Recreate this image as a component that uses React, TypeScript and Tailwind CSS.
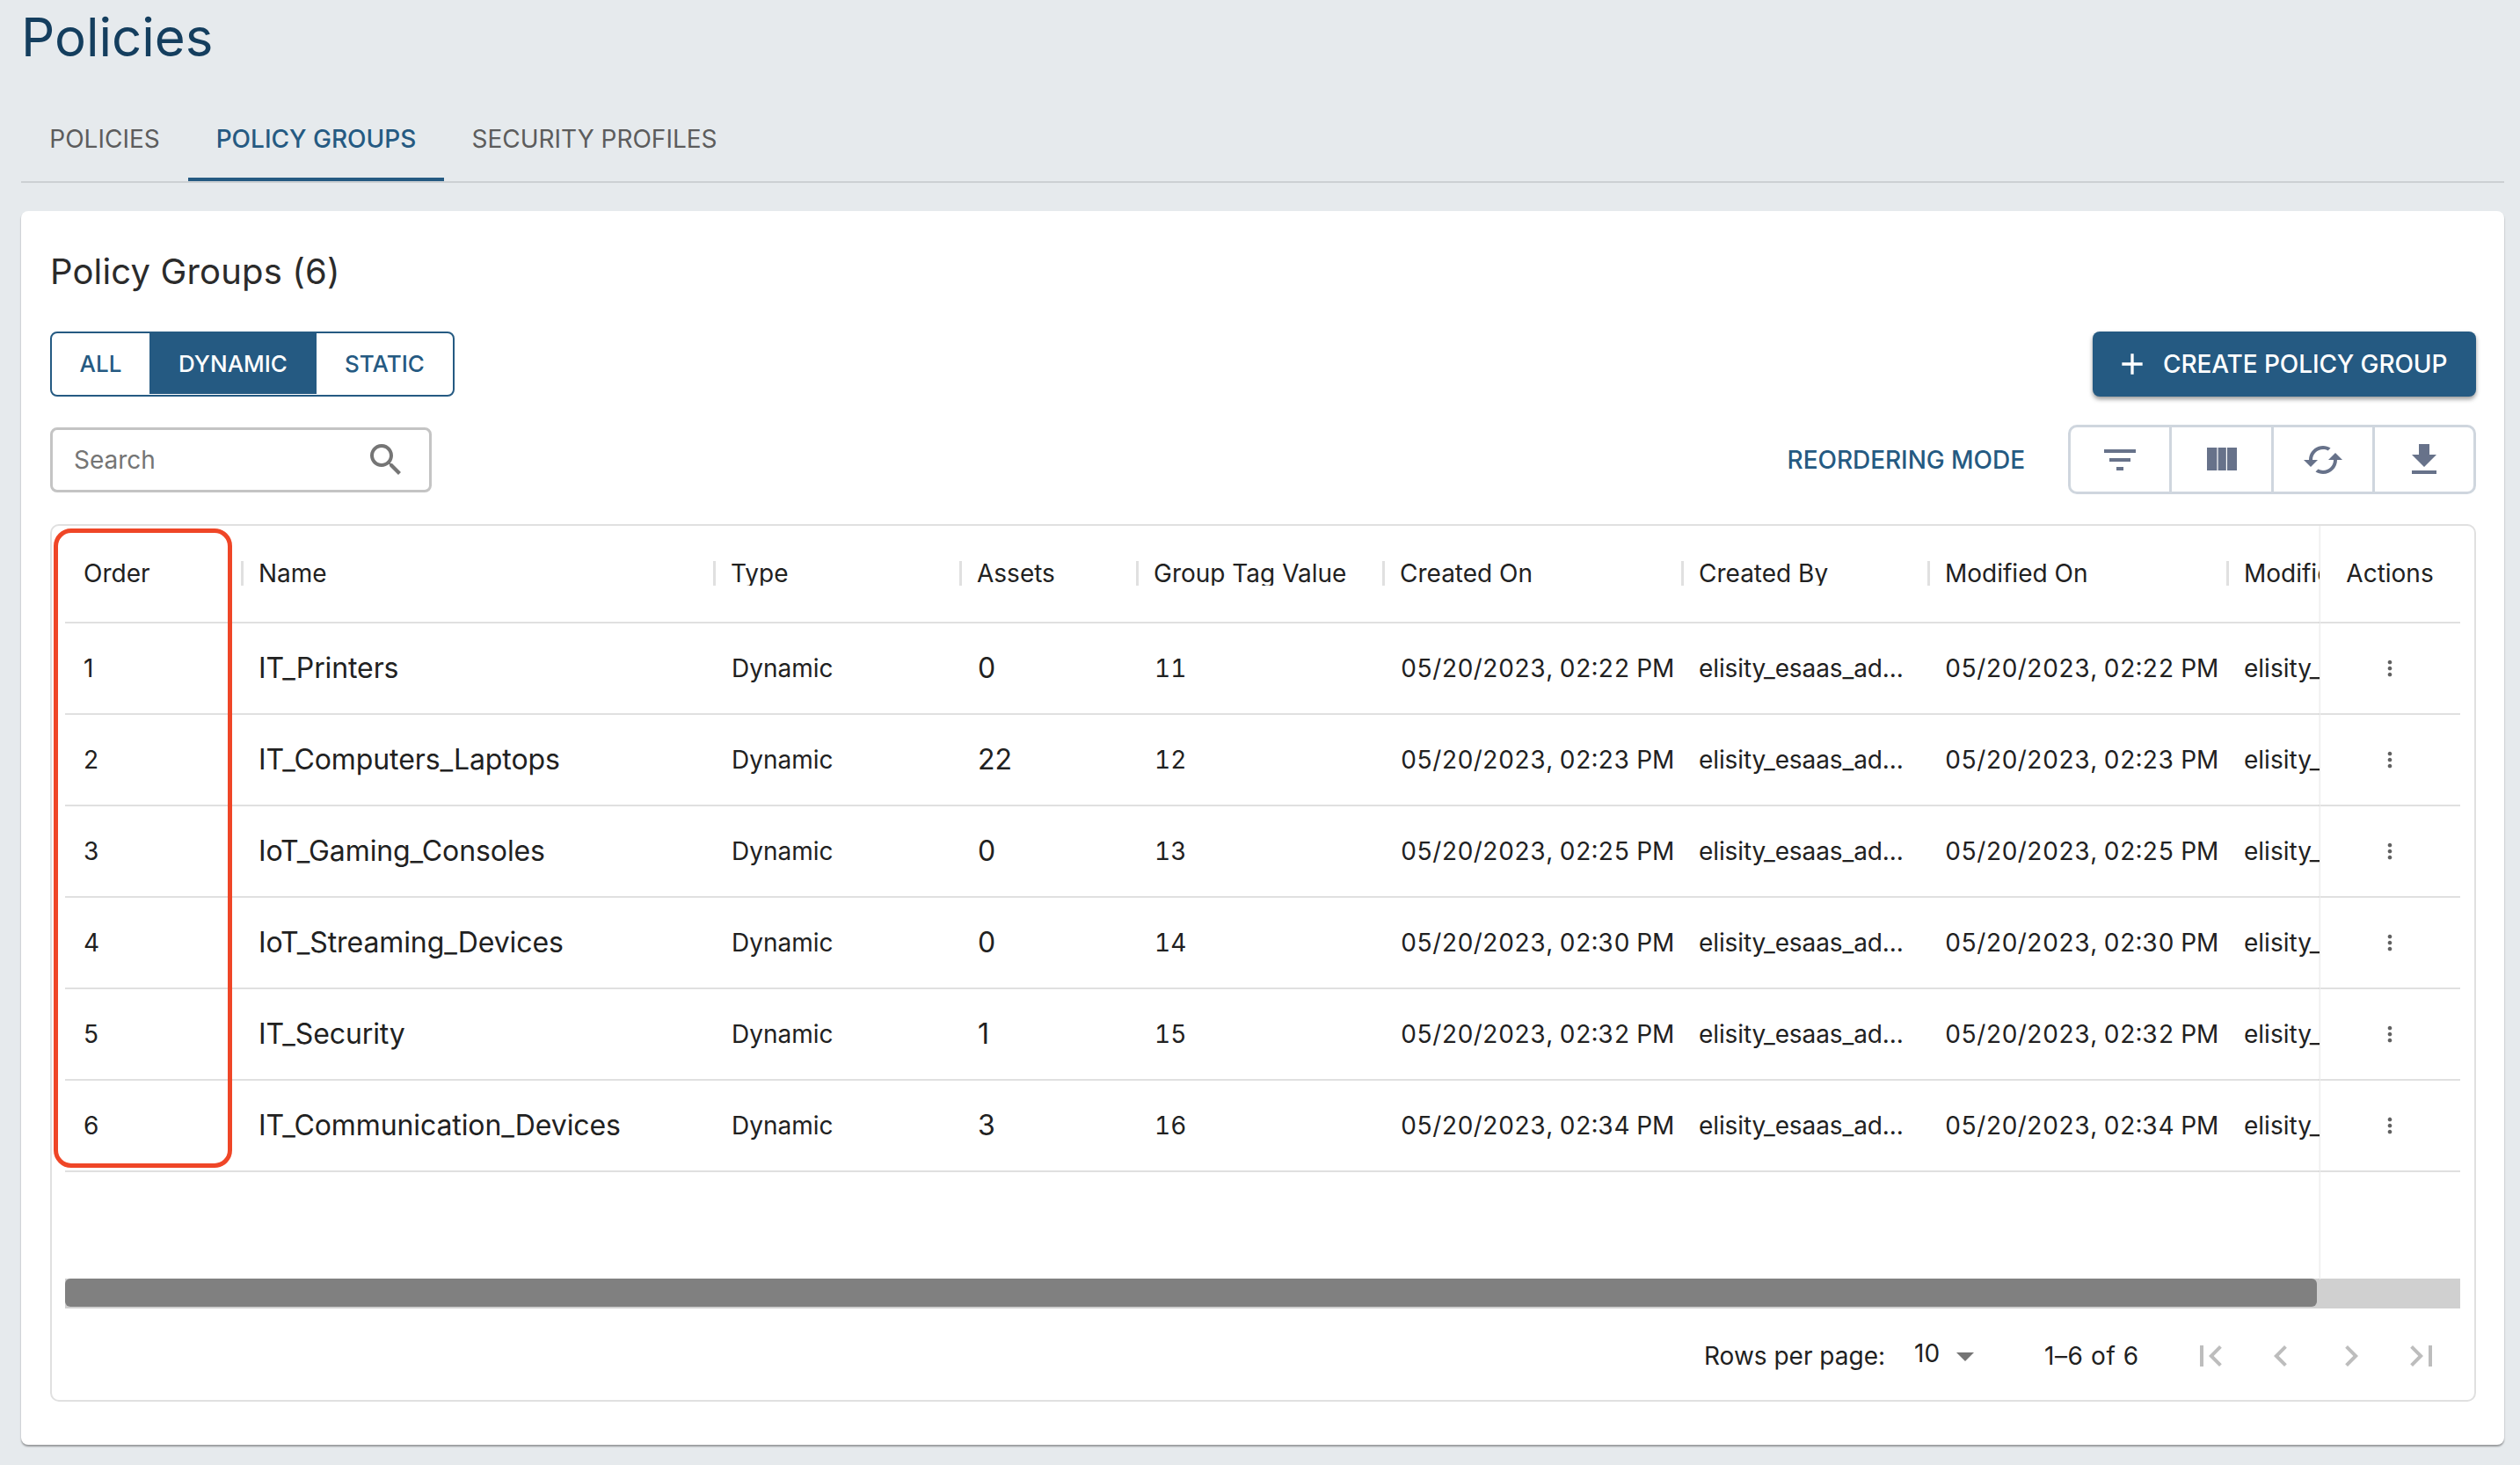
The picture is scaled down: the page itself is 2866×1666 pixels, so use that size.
const font = "[font-family:Inter,'Liberation_Sans',sans-serif]"

const columns = [
  { label: "Order", width: "w-[200px]" },
  { label: "Name", width: "w-[537px]" },
  { label: "Type", width: "w-[280px]" },
  { label: "Assets", width: "w-[201px]" },
  { label: "Group Tag Value", width: "w-[280px]" },
  { label: "Created On", width: "w-[340px]" },
  { label: "Created By", width: "w-[280px]" },
  { label: "Modified On", width: "w-[340px]" },
  { label: "Modified By", width: "w-[280px]" },
]

const rows = [
  { order: 1, name: "IT_Printers", assets: 0, tag: 11, time: "02:22 PM" },
  { order: 2, name: "IT_Computers_Laptops", assets: 22, tag: 12, time: "02:23 PM" },
  { order: 3, name: "IoT_Gaming_Consoles", assets: 0, tag: 13, time: "02:25 PM" },
  { order: 4, name: "IoT_Streaming_Devices", assets: 0, tag: 14, time: "02:30 PM" },
  { order: 5, name: "IT_Security", assets: 1, tag: 15, time: "02:32 PM" },
  { order: 6, name: "IT_Communication_Devices", assets: 3, tag: 16, time: "02:34 PM" },
]

function Icon({ d, className }: { d: string; className: string }) {
  return (
    <svg viewBox="0 0 24 24" fill="currentColor" className={className}>
      <path d={d} />
    </svg>
  )
}

function Cell({ width, className, children }: { width: string; className?: string; children: React.ReactNode }) {
  return <div className={`${width} shrink-0 whitespace-nowrap pl-[21px] ${className ?? ""}`}>{children}</div>
}

function Row({ row }: { row: (typeof rows)[number] }) {
  const date = `05/20/2023, ${row.time}`
  return (
    <div className="flex h-[104px] items-center border-b-2 border-[#e0e0e0] text-[#212121]">
      <div className="flex w-[2564px] shrink-0 items-center overflow-hidden">
        <Cell width="w-[200px]" className="text-[28px]">{row.order}</Cell>
        <Cell width="w-[537px]" className="!pl-[20px] text-[32px] tracking-[-0.1px]">{row.name}</Cell>
        <Cell width="w-[280px]" className="text-[28px]">Dynamic</Cell>
        <Cell width="w-[201px]" className="text-[32px]">{row.assets}</Cell>
        <Cell width="w-[280px]" className="text-[28px] tabular-nums">{row.tag}</Cell>
        <Cell width="w-[340px]" className="text-[28px] tabular-nums">{date}</Cell>
        <Cell width="w-[280px]" className="!pl-[20px] text-[28px] tracking-[-0.1px]">elisity_esaas_ad...</Cell>
        <Cell width="w-[340px]" className="!pl-[20px] text-[28px] tabular-nums">{date}</Cell>
        <Cell width="w-[106px] overflow-hidden" className="!pl-[20px] text-[28px]">elisity_esaas_admin</Cell>
      </div>
      <div className="flex flex-1 justify-center">
        <Icon
          d="M12 8c1.1 0 2-.9 2-2s-.9-2-2-2-2 .9-2 2 .9 2 2 2zm0 2c-1.1 0-2 .9-2 2s.9 2 2 2 2-.9 2-2-.9-2-2-2zm0 6c-1.1 0-2 .9-2 2s.9 2 2 2 2-.9 2-2-.9-2-2-2z"
          className="h-[28px] w-[28px] text-[#616161]"
        />
      </div>
    </div>
  )
}

export default function App() {
  return (
    <div className={`h-[1666px] w-[2866px] overflow-hidden bg-[#e6eaed] ${font}`}>
      <div className="flex h-[84px] items-center pl-[24px] text-[60px] leading-none text-[#143e5e]">Policies</div>

      <div className="ml-[24px] mr-[18px] flex h-[124px] items-end border-b-2 border-[#ccd0d3]">
        <div className="flex h-[94px] w-[190px] items-center justify-center pb-[3px] text-[28px] text-[#5c5c5c]">POLICIES</div>
        <div className="flex h-[94px] w-[291px] items-center justify-center border-b-4 border-[#255a82] pt-[1px] text-[28px] font-medium text-[#255a82]">
          POLICY GROUPS
        </div>
        <div className="flex h-[94px] w-[342px] items-center justify-center pb-[3px] text-[28px] text-[#5c5c5c]">SECURITY PROFILES</div>
      </div>

      <div className="ml-[24px] mr-[18px] mt-[32px] h-[1403px] rounded-[8px] bg-white pl-[33px] pr-[32px] pt-[44px] shadow-[0_2px_2px_rgba(0,0,0,0.35)]">
        <div className="flex h-[50px] items-center text-[40px] tracking-[0.15px] text-[#2b2b2b]">Policy Groups (6)</div>

        <div className="mt-[43px] flex h-[74px] items-center justify-between">
          <div className="flex h-full overflow-hidden rounded-[8px] border-2 border-[#255a82] pb-[1px] text-[26px] font-medium text-[#255a82]">
            <div className="flex w-[111px] items-center justify-center">ALL</div>
            <div className="flex w-[190px] items-center justify-center bg-[#255a82] text-white">DYNAMIC</div>
            <div className="flex w-[155px] items-center justify-center">STATIC</div>
          </div>
          <div className="flex h-full w-[436px] items-center rounded-[8px] bg-[#255a82] pl-[25px] text-[28px] font-medium tracking-[-0.1px] text-white shadow-[0_3px_5px_rgba(0,0,0,0.4)]">
            <Icon d="M19 13h-6v6h-2v-6H5v-2h6V5h2v6h6v2z" className="h-[40px] w-[40px]" />
            <span className="ml-[15px]">CREATE POLICY GROUP</span>
          </div>
        </div>

        <div className="mt-[32px] flex h-[79px] items-center justify-between">
          <div className="flex h-[74px] w-[434px] items-center justify-between rounded-[8px] border-[3px] border-[#c4c4c4] pl-[24px] pr-[25px] text-[28px] text-[#757575]">
            Search
            <Icon
              d="M15.5 14h-.79l-.28-.27C15.41 12.59 16 11.11 16 9.5 16 5.91 13.09 3 9.5 3S3 5.91 3 9.5 5.91 16 9.5 16c1.61 0 3.09-.59 4.23-1.57l.27.28v.79l5 4.99L20.49 19l-4.99-5zm-6 0C7.01 14 5 11.99 5 9.5S7.01 5 9.5 5 14 7.01 14 9.5 11.99 14 9.5 14z"
              className="h-[48px] w-[48px]"
            />
          </div>
          <div className="flex items-center">
            <span className="mr-[49px] text-[28px] font-medium tracking-[-0.05px] text-[#255a82]">REORDERING MODE</span>
            <div className="flex h-[79px] w-[464px] rounded-[10px] border-[3px] border-[#cfd6de] text-[#67728a]">
              <div className="flex flex-1 items-center justify-center border-r-[3px] border-[#cfd6de]">
                <Icon d="M10 18h4v-2h-4v2zM3 6v2h18V6H3zm3 7h12v-2H6v2z" className="h-[48px] w-[48px]" />
              </div>
              <div className="flex flex-1 items-center justify-center border-r-[3px] border-[#cfd6de]">
                <Icon d="M4 5h5.7v13H4zM10.3 5h4.6v13h-4.6zM15.5 5H21v13h-5.5z" className="h-[48px] w-[48px]" />
              </div>
              <div className="flex flex-1 items-center justify-center border-r-[3px] border-[#cfd6de]">
                <Icon
                  d="M12 4V1L8 5l4 4V6c3.31 0 6 2.69 6 6 0 1.01-.25 1.97-.7 2.8l1.46 1.46C19.54 15.03 20 13.57 20 12c0-4.42-3.58-8-8-8zm0 14c-3.31 0-6-2.69-6-6 0-1.01.25-1.97.7-2.8L5.24 7.74C4.46 8.97 4 10.43 4 12c0 4.42 3.58 8 8 8v3l4-4-4-4v3z"
                  className="h-[48px] w-[48px] rotate-90"
                />
              </div>
              <div className="flex flex-1 items-center justify-center">
                <Icon d="M19 9h-4V3H9v6H5l7 7 7-7zM5 18v2h14v-2H5z" className="h-[48px] w-[48px]" />
              </div>
            </div>
          </div>
        </div>

        <div className="relative mt-[34px] h-[998px] rounded-[10px] border-2 border-[#e0e0e0] pl-[15px] pr-[16px]">
          {/* red callout drawn on top of the screenshot */}
          <div className="absolute left-[2px] top-[3px] h-[727px] w-[203px] rounded-[20px] border-[5px] border-[#ef4627]" />

          <div className="flex h-[111px] items-center border-b-2 border-[#e0e0e0] pb-[2px] text-[28px] leading-[28px] text-[#212121]">
            <div className="flex w-[2564px] shrink-0 overflow-hidden">
              {columns.map((col, i) => (
                <div key={col.label} className={`${col.width} flex h-[28px] shrink-0 items-center whitespace-nowrap pl-[21px] ${i > 0 ? "border-l-[3px] border-[#e0e0e0] !pl-[17px]" : ""}`}>
                  {col.label}
                </div>
              ))}
            </div>
            <div className="flex-1 text-center">Actions</div>
          </div>

          {rows.map((row) => (
            <Row key={row.order} row={row} />
          ))}

          <div className="mt-[121px] h-[34px] bg-[#d0d0d0]">
            <div className="h-[32px] w-[2561px] rounded-[6px] bg-[#808080]" />
          </div>

          <div className="flex h-[103px] items-center pt-[4px] text-[28px] text-[#212121]">
            <span className="ml-[1864px] w-[239px] whitespace-nowrap">Rows per page:</span>
            <span className="w-[34px] -translate-y-[3px]">10</span>
            <Icon d="M7 10l5 5 5-5z" className="h-[48px] w-[48px] text-[#757575]" />
            <span className="ml-[66px] w-[165px] whitespace-nowrap tracking-[0.6px]">1–6 of 6</span>
            <div className="flex gap-[32px] text-[#bdbdbd]">
              <Icon d="M18.41 16.59L13.82 12l4.59-4.59L17 6l-6 6 6 6zM6 6h2v12H6z" className="h-[48px] w-[48px]" />
              <Icon d="M15.41 7.41L14 6l-6 6 6 6 1.41-1.41L10.83 12z" className="h-[48px] w-[48px]" />
              <Icon d="M10 6L8.59 7.41 13.17 12l-4.58 4.59L10 18l6-6z" className="h-[48px] w-[48px]" />
              <Icon d="M5.59 7.41L10.18 12l-4.59 4.59L7 18l6-6-6-6zM16 6h2v12h-2z" className="h-[48px] w-[48px]" />
            </div>
          </div>

          {/* sticky column edge */}
          <div className="absolute left-[2579px] top-0 h-[857px] w-px bg-[#ececec] shadow-[-1px_0_2px_rgba(0,0,0,0.05)]" />
        </div>
      </div>
    </div>
  )
}
